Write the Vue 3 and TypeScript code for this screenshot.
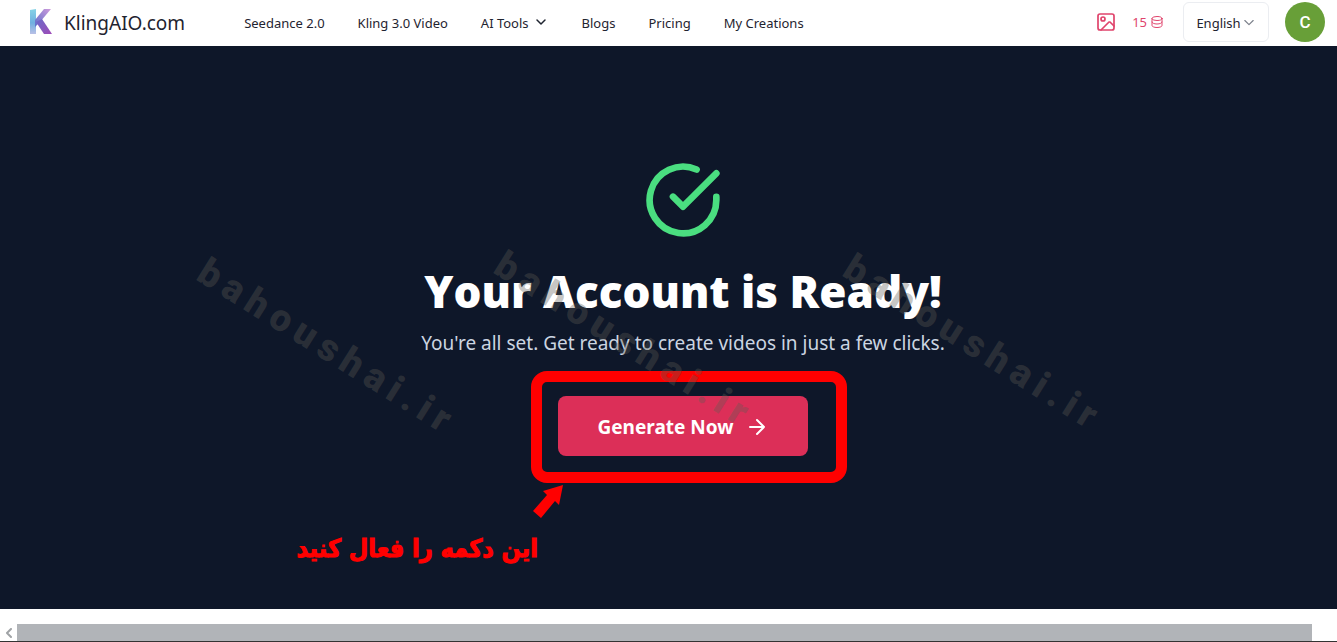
<script setup lang="ts">
interface NavItem {
  label: string
  menu?: boolean
}

const navItems: NavItem[] = [
  { label: 'Seedance 2.0' },
  { label: 'Kling 3.0 Video' },
  { label: 'AI Tools', menu: true },
  { label: 'Blogs' },
  { label: 'Pricing' },
  { label: 'My Creations' },
]

const marks: string[] = ['mark-left', 'mark-middle', 'mark-right']
</script>

<template>
  <div class="page">
    <header class="topbar">
      <a class="brand" href="#">
        <svg class="logo" viewBox="0 0 24 28" aria-hidden="true">
          <defs>
            <linearGradient id="stem" x1="0" y1="0" x2="0" y2="1">
              <stop offset="0" stop-color="#86d3e6" />
              <stop offset="0.55" stop-color="#6fb0e0" />
              <stop offset="1" stop-color="#b9c0e6" />
            </linearGradient>
            <linearGradient id="arm" x1="1" y1="0" x2="0" y2="1">
              <stop offset="0" stop-color="#cf9bdc" />
              <stop offset="1" stop-color="#5b6fc9" />
            </linearGradient>
            <linearGradient id="leg" x1="0" y1="0" x2="1" y2="1">
              <stop offset="0" stop-color="#6a6bc8" />
              <stop offset="1" stop-color="#a04bb8" />
            </linearGradient>
          </defs>
          <path d="M2 2l6-1v25H2z" fill="url(#stem)" />
          <path d="M16 1h7L12 14l-5 5v-7z" fill="url(#arm)" />
          <path d="M8 14l6-3 10 15h-8z" fill="url(#leg)" />
        </svg>
        <span>KlingAIO.com</span>
      </a>

      <nav class="nav">
        <template v-for="item in navItems" :key="item.label">
          <button v-if="item.menu" type="button" class="nav-item">
            {{ item.label }}
            <svg class="nav-chevron" viewBox="0 0 12 12" aria-hidden="true"><path d="M2 3l4 4 4-4" /></svg>
          </button>
          <a v-else class="nav-item" href="#">{{ item.label }}</a>
        </template>
      </nav>

      <div class="actions">
        <a class="gallery" href="#" aria-label="Gallery">
          <svg viewBox="0 0 18 18" aria-hidden="true">
            <rect x="1" y="1" width="16" height="16" rx="2" />
            <circle cx="6" cy="6" r="2" />
            <path d="M4 17l8-8h1l4 4" />
          </svg>
        </a>
        <a class="credits" href="#">
          15
          <svg viewBox="0 0 12 14" aria-hidden="true">
            <ellipse cx="6" cy="3.5" rx="5" ry="2" />
            <path d="M1 3.5v7c0 1 2 2 5 2s5-1 5-2v-7M1 7c0 1 2 2 5 2s5-1 5-2" />
          </svg>
        </a>
        <button type="button" class="language">
          English
          <svg viewBox="0 0 12 12" aria-hidden="true"><path d="M1 3l5 5 5-5" /></svg>
        </button>
        <button type="button" class="avatar">C</button>
      </div>
    </header>

    <main class="hero">
      <svg class="ready-icon" viewBox="0 0 24 24" aria-hidden="true">
        <path d="M22 11.08V12a10 10 0 1 1-5.93-9.14" />
        <path d="M9 11l3 3L22 4" />
      </svg>
      <h1>Your Account is Ready!</h1>
      <p class="lead">You're all set. Get ready to create videos in just a few clicks.</p>
      <div class="cta">
        <button type="button" class="generate">
          Generate Now
          <svg viewBox="0 0 18 18" aria-hidden="true"><path d="M2 9h14M9 2l7 7-7 7" /></svg>
        </button>
        <div class="frame"></div>
        <svg class="pointer" viewBox="0 0 32 34" aria-hidden="true">
          <path d="M31 1L11 7l4 4L1 27l8 7 14-17 4 4z" />
        </svg>
        <p class="note" dir="rtl" lang="fa">این دکمه را فعال کنید</p>
      </div>
      <span v-for="mark in marks" :key="mark" class="mark" :class="mark" aria-hidden="true">bahoushai.ir</span>
    </main>

    <footer class="scrollbar">
      <button type="button" class="scroll-arrow" aria-label="Scroll left">
        <svg viewBox="0 0 8 10" aria-hidden="true"><path d="M6 1L2 5l4 4" /></svg>
      </button>
      <div class="thumb"></div>
    </footer>
  </div>
</template>

<style>
body {
  margin: 0;
  background: #fff;
}
</style>

<style scoped>
.page {
  display: flex;
  flex-direction: column;
  min-height: 100vh;
  overflow: hidden;
  font-family: "Noto Sans", "Open Sans", sans-serif;
  color: #1f2430;
}

button {
  font: inherit;
  color: inherit;
  border: 0;
  padding: 0;
  background: none;
  cursor: pointer;
}

a {
  color: inherit;
  text-decoration: none;
}

svg {
  fill: none;
  stroke-linecap: round;
  stroke-linejoin: round;
}

.topbar {
  display: flex;
  align-items: center;
  box-sizing: border-box;
  height: 46px;
  padding: 0 12px 2px 28px;
  background: #fff;
}

.brand {
  display: flex;
  align-items: center;
  gap: 12px;
  font-size: 19px;
  line-height: 28px;
}

.brand span {
  padding-top: 2px;
}

.logo {
  width: 24px;
  height: 28px;
}

.nav {
  display: flex;
  align-items: center;
  gap: 33px;
  margin-left: 59px;
  padding-top: 2px;
}

.nav-item {
  display: flex;
  align-items: center;
  gap: 6px;
  font-size: 13px;
  line-height: 20px;
  white-space: nowrap;
}

.nav-chevron {
  width: 12px;
  height: 12px;
  margin-right: 2px;
  stroke: #1f2430;
  stroke-width: 1.5;
}

.actions {
  display: flex;
  align-items: center;
  margin-left: auto;
}

.gallery svg {
  display: block;
  width: 18px;
  height: 18px;
  stroke: #e0446c;
  stroke-width: 1.7;
}

.credits {
  display: flex;
  align-items: center;
  gap: 4px;
  margin: 0 20px 0 17px;
  font-size: 13px;
  color: #e0446c;
}

.credits svg {
  width: 12px;
  height: 14px;
  stroke: #e0446c;
  stroke-width: 1;
}

.language {
  display: flex;
  align-items: center;
  justify-content: center;
  gap: 3px;
  box-sizing: border-box;
  width: 86px;
  height: 40px;
  padding: 2px 2px 0 0;
  border: 1px solid #ebedf1;
  border-radius: 6px;
  font-size: 13px;
}

.language svg {
  width: 10px;
  height: 10px;
  stroke: #7c818b;
  stroke-width: 1.4;
}

.avatar {
  width: 40px;
  height: 40px;
  margin-left: 16px;
  border-radius: 50%;
  background: #689f38;
  color: #fff;
  font-family: Roboto, sans-serif;
  font-size: 17px;
  font-weight: 500;
}

.hero {
  position: relative;
  flex: 1;
  display: flex;
  flex-direction: column;
  align-items: center;
  padding: 114px 0 0 29px;
  background: #0e1729;
}

.ready-icon {
  width: 80px;
  height: 80px;
  stroke: #4ade80;
  stroke-width: 2;
}

h1 {
  margin: 27px 0 0;
  font-family: "Open Sans", "Noto Sans", sans-serif;
  font-size: 44px;
  font-weight: 800;
  line-height: 48px;
  color: #fff;
  white-space: nowrap;
}

.lead {
  margin: 14px 0 0;
  font-size: 19px;
  line-height: 28px;
  color: #cbd5e1;
  white-space: nowrap;
}

.cta {
  position: relative;
  margin-top: 39px;
}

.generate {
  display: flex;
  align-items: center;
  justify-content: center;
  gap: 14px;
  box-sizing: border-box;
  width: 250px;
  height: 60px;
  padding: 1px 3px 0 0;
  border-radius: 8px;
  background: #dc2f58;
  color: #fff;
  font-size: 19px;
  font-weight: 700;
}

.generate svg {
  width: 18px;
  height: 18px;
  stroke: #fff;
  stroke-width: 2;
}

.frame {
  position: absolute;
  inset: -25px -39px -27px -27px;
  border: 11px solid #f00;
  border-radius: 16px;
  pointer-events: none;
}

.pointer {
  position: absolute;
  left: -26px;
  top: 88px;
  width: 32px;
  height: 34px;
  fill: #f00;
}

.note {
  position: absolute;
  right: 270px;
  top: 133px;
  margin: 0;
  font-family: "DejaVu Sans Condensed", "DejaVu Sans", sans-serif;
  font-size: 25px;
  font-weight: 700;
  line-height: 40px;
  color: #f00;
  -webkit-text-stroke: 1px #f00;
  white-space: nowrap;
}

.mark {
  position: absolute;
  font-family: Roboto, sans-serif;
  font-size: 38px;
  font-weight: 900;
  line-height: 40px;
  letter-spacing: 7px;
  color: rgb(94 92 84 / 36%);
  transform: rotate(32deg);
  transform-origin: 0 100%;
  white-space: nowrap;
  pointer-events: none;
}

.mark-left {
  left: 191px;
  top: 199px;
}

.mark-middle {
  left: 488px;
  top: 192px;
}

.mark-right {
  left: 837px;
  top: 195px;
}

.scrollbar {
  display: flex;
  height: 17px;
  padding: 15px 25px 0 0;
  border-bottom: 1px solid #333;
  background: #fff;
}

.scroll-arrow {
  display: flex;
  align-items: center;
  justify-content: center;
  width: 17px;
}

.scroll-arrow svg {
  width: 8px;
  height: 10px;
  stroke: #a0a3a6;
  stroke-width: 2;
}

.thumb {
  flex: 1;
  background: #b1b4b8;
}
</style>
